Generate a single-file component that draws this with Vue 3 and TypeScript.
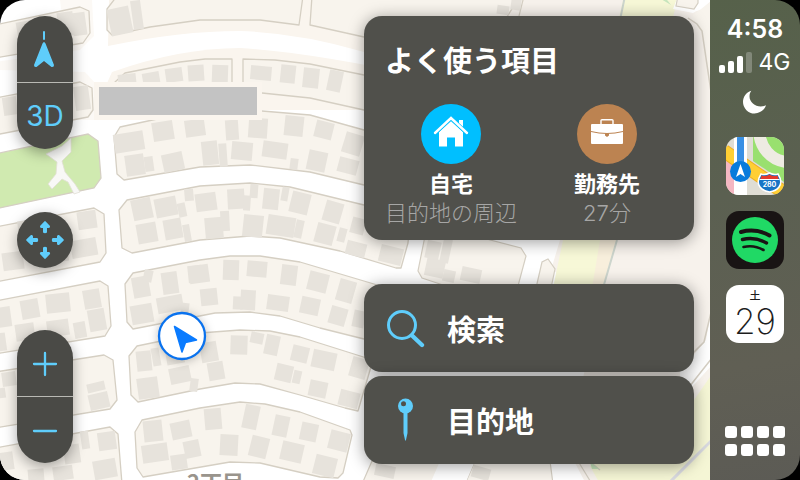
<script setup lang="ts">
type Building = [cx: number, cy: number, w: number, h: number, angle: number]

const blocks: string[] = [
  'M-5 25L80 7L89 11L90 33L83 43L-5 58Z',
  'M117-4L107 9L107 30L112 35L150 27L200 20L260 20L299 25L303-4Z',
  'M312-4L310 25L364 37L480 60L520-4Z',
  'M115 82L125 73L180 62L205 59L232 59L232 90L115 98Z',
  'M243 93L243 59L275 60L310 64L364 75L430 92V126L364 110L310 98L262 93Z',
  'M120 127L185 113L262 111L310 115L364 130L430 150V202L364 185L310 172L250 165L200 167L124 180L117 174L114 137Z',
  'M127 200L200 186L250 183L290 187L364 205L410 220L408 243L401 268L396 268L340 251L280 238L250 236L200 240L132 253L122 248L119 210Z',
  'M133 273L200 260L230 256L260 256L300 262L374 284L400 292V350L364 339L320 328L280 316L250 312L215 313L133 329L127 322L125 284Z',
  'M137 346L200 333L240 330L270 331L300 337L373 360L358 411L345 408L300 395L260 384L235 383L200 389L138 402L131 395L129 356Z',
  'M142 420L200 408L240 402L265 404L300 412L350 430L352 435L343 473L338 478L320 477L260 463L230 462L143 477L137 468L135 432Z',
  'M-5 98L80 82L92 88L93 110L88 117L-5 135Z',
  'M-5 227L94 208L104 214L106 253L100 262L-5 282Z',
  'M-5 301L100 281L108 286L111 326L105 336L-5 354Z',
  'M-5 372L104 355L113 360L117 400L110 409L-5 428Z',
  'M-5 448L110 427L118 434L122 484H-5Z',
]

const buildings: Building[] = [
  [27, 30, 20, 18, -10], [66, 24, 16, 24, -8], [79, 24, 14, 23, -8], [82, 98, 15, 24, -8], [10, 106, 14, 18, -8],
  [120, 21, 22, 27, -12], [137, 15, 10, 29, -8],
  [127, 79, 18, 10, -6], [151, 78, 17, 11, -10], [174, 75, 17, 14, -8], [196, 73, 16, 16, -4], [220, 74, 16, 18, 2],
  [261, 73, 21, 14, 5], [288, 74, 15, 18, 6], [311, 78, 16, 20, 6], [335, 81, 14, 21, 12],
  [129, 142, 30, 19, -9], [135, 165, 19, 21, -8], [149, 164, 9, 15, -8], [163, 131, 21, 19, -9], [173, 162, 21, 18, -12],
  [195, 128, 20, 17, -8], [232, 130, 13, 20, -4], [258, 128, 19, 20, 4], [294, 126, 19, 20, 6], [324, 130, 18, 17, 14], [353, 144, 19, 21, 17],
  [210, 153, 16, 24, -6], [223, 155, 8, 23, -4], [242, 151, 21, 18, 5], [275, 150, 25, 16, 8], [294, 164, 8, 11, 8], [317, 161, 19, 20, 12], [348, 166, 20, 15, 15],
  [142, 209, 20, 21, -12], [166, 207, 22, 19, -11], [182, 210, 8, 14, -12], [189, 195, 9, 12, -5], [147, 233, 20, 20, -10], [173, 229, 18, 20, -10], [187, 233, 7, 17, -10],
  [206, 202, 21, 18, -8], [236, 199, 17, 20, -3], [247, 203, 7, 15, 4], [254, 191, 8, 14, 4], [271, 199, 16, 21, 6], [285, 194, 7, 14, 10], [300, 203, 19, 21, 14], [333, 212, 18, 21, 16],
  [214, 228, 18, 21, -5], [225, 221, 9, 20, -3], [253, 226, 20, 22, 6], [281, 226, 28, 20, 9], [299, 229, 8, 18, 12], [325, 234, 19, 20, 15], [342, 235, 8, 14, 15], [358, 226, 14, 16, 15], [356, 249, 20, 14, 14], [391, 255, 23, 17, 14],
  [13, 261, 21, 18, -8], [84, 248, 26, 18, -10], [87, 220, 19, 18, -8], [58, 253, 20, 18, -8], [28, 228, 20, 16, -8],
  [4, 317, 14, 20, -8], [30, 309, 18, 19, -10], [58, 303, 24, 19, -6], [92, 299, 17, 19, -10], [97, 320, 17, 22, -10], [25, 332, 19, 17, -8], [58, 328, 22, 16, -8], [80, 330, 12, 16, -10], [1, 342, 10, 18, -8],
  [96, 387, 18, 9, -13], [99, 401, 20, 16, -13], [9, 379, 14, 14, -8], [2, 393, 7, 10, -8],
  [85, 440, 8, 18, -8], [107, 441, 18, 18, -8], [105, 469, 23, 19, -10], [72, 454, 16, 19, -8], [63, 473, 20, 14, -8], [36, 475, 16, 12, -5], [7, 461, 13, 18, -8],
  [141, 287, 17, 21, -10], [148, 276, 9, 12, 12], [170, 283, 16, 22, -8], [195, 274, 14, 17, -6], [142, 314, 22, 19, -10], [170, 304, 26, 16, -10], [185, 308, 8, 10, 8],
  [199, 274, 20, 18, -8], [231, 270, 16, 20, 2], [257, 269, 20, 16, 5], [289, 275, 16, 20, 7], [318, 282, 20, 19, 14], [346, 291, 17, 22, 16],
  [209, 297, 17, 17, -6], [248, 300, 15, 20, 3], [238, 303, 10, 13, 3], [278, 303, 22, 15, 8], [310, 306, 19, 17, 12], [338, 316, 17, 18, 16], [359, 319, 12, 17, 12],
  [144, 361, 15, 20, -6], [156, 357, 8, 18, -10], [175, 356, 18, 16, -10], [148, 388, 21, 21, -8], [180, 375, 21, 16, -12], [194, 385, 8, 13, 8],
  [209, 352, 17, 20, -10], [216, 371, 16, 18, -10], [239, 345, 17, 19, 2], [257, 338, 13, 11, 12], [272, 345, 14, 20, 12], [300, 354, 17, 16, 14], [324, 360, 24, 18, 12], [359, 368, 17, 20, 16],
  [284, 373, 17, 17, 13], [297, 377, 8, 13, 13], [318, 389, 18, 16, 12], [349, 399, 20, 16, 14],
  [153, 431, 19, 21, -6], [181, 430, 20, 17, -12], [155, 453, 26, 18, -8], [179, 462, 16, 15, -8], [192, 449, 16, 17, -12],
  [213, 419, 17, 21, -5], [251, 417, 15, 24, 12], [281, 426, 15, 21, 12], [309, 432, 17, 18, 12], [339, 441, 20, 19, 14],
  [229, 445, 18, 21, 3], [259, 447, 18, 21, 14], [292, 452, 22, 19, 13], [325, 466, 22, 20, 14],
  [435, 268, 19, 18, 12], [449, 276, 12, 12, 12], [471, 275, 20, 14, 12], [433, 250, 14, 18, 12], [446, 251, 9, 24, 12],
  [503, 10, 12, 9, 8], [516, 4, 10, 12, 8], [385, 471, 20, 12, 12], [481, 473, 18, 12, 16],
]

const signalBars: { height: number; on: boolean }[] = [
  { height: 8, on: true },
  { height: 12, on: true },
  { height: 17, on: true },
  { height: 21, on: false },
]
</script>

<template>
  <div class="screen">
    <main class="map-area">
      <svg class="map" viewBox="0 0 710 480" preserveAspectRatio="xMinYMin slice" aria-hidden="true">
        <rect width="710" height="480" fill="#fff" />
        <!-- pale verges around the upper road -->
        <g fill="#faf5ee">
          <path d="M109 0H364V52Q300 33 240 31Q180 31 108 46Z" />
          <path d="M112 72Q180 48 240 48Q310 52 430 78V110H95Z" />
          <path d="M60 0H92L94 36L80 50L-5 62V70L85 72L96 84L94 120H76Z" opacity=".6" />
        </g>
        <!-- ground east of the housing -->
        <path d="M395-4H720V484H560L600 300L520 250L430 200L380 60Z" fill="#f7f2ec" />
        <path d="M450-4L480 12L364-4ZM485-4L500 0L492 20L460 14Z" fill="#fff" />
        <path d="M497-4L492 20M524-4L518 20M370-4L420 12L475 8L472-4" fill="none" stroke="#d5cfc3" stroke-width="1.2" />
        <path d="M624-4H678L640 160L617 242L603 288H553L563 240L600 100Z" fill="#f7f8d7" />
        <path d="M600 240H617L603 288H592Z" fill="#f8efdc" />
        <path d="M625-4L620 20M617 240L603 288" stroke="#cdd5cd" stroke-width="2" />
        <path d="M664-4L671 5L661-1Z" fill="#c7e5bd" />
        <path d="M678-4L673 9L693 13Q712 2 712 24V-4Z" fill="#fff" />
        <path d="M678-4L676 6L694 9L698 3V-4" fill="#f8f4ed" stroke="#d5cfc3" stroke-width="1.2" />
        <path d="M690 18L701 28L712 90V0Z" fill="#f8f4ed" />
        <path d="M688 18L697 24L702 31L711 92" fill="none" stroke="#d5cfc3" stroke-width="1.5" />
        <path d="M408 238L401 272L360 262V290H545L560 240Z" fill="#fff" />
        <path d="M425 236L418 271L422 278L446 286H518L526 256L521 248L475 236Z" fill="#f8f4ed" stroke="#d5cfc3" stroke-width="1.2" />
        <path d="M536 288L542 262L548 259L555 269L551 288Z" fill="#f8f4ed" stroke="#d5cfc3" stroke-width="1.2" />
        <path d="M712 306L706 340L680 372V400L712 365Z" fill="#fff" />
        <path d="M712 308L704 342L680 366M712 358L682 396" fill="none" stroke="#d5cfc3" stroke-width="1.5" />
        <path d="M712 374L680 420L590 466L600 484H712Z" fill="#f5f6d5" />
        <path d="M712 440L668 484" stroke="#d9dae0" stroke-width="3" />
        <path d="M360 340H400V484H350Z" fill="#fff" />
        <path d="M372 461L362 484H440L452 461ZM475 461L465 484H553L550 461Z" fill="#f8f4ed" stroke="#d5cfc3" stroke-width="1.2" />
        <path d="M440 461H475L465 484H430ZM556 461H574L586 484H560Z" fill="#fff" />
        <path d="M578 461L592 484M589 461L600 470" stroke="#d5cfc3" stroke-width="1.2" />
        <path d="M590 462L599 469L592 469Z" fill="#c7e5bd" />

        <path v-for="(d, i) in blocks" :key="`k${i}`" :d="d" fill="#f8f4ed" stroke="#d5cfc3" stroke-width="1.3" stroke-linejoin="round" />
        <path d="M-5 154L88 134L98 141L101 178L94 188L-5 209Z" fill="#d0eab0" stroke="#d5cfc3" stroke-width="1.3" />
        <path d="M71 138L71 152L62 161L65 172L75 184L80 192L74 194L68 182L62 179L52 189L48 184L56 174L57 162L46 154L62 146Z" fill="#f8f8f6" stroke="#e2e0d6" stroke-width=".8" />
        <rect
          v-for="([cx, cy, w, h, a], i) in buildings" :key="`b${i}`"
          :x="cx - w / 2" :y="cy - h / 2" :width="w" :height="h"
          :transform="`rotate(${a} ${cx} ${cy})`" fill="#e7e3dc"
        />
        <rect x="94" y="82" width="168" height="38" fill="#faf5ee" />
        <rect x="99" y="87" width="158" height="28" fill="#c3c3c3" />
        <text class="district" x="187" y="491">2丁目</text>
        <g class="marker">
          <circle cx="182" cy="336" r="23" fill="#fff" stroke="#0a72ee" stroke-width="2.300" />
          <path d="M174.500 326.500L196.500 340L185.500 342.500L182 352Z" fill="#0a7bff" stroke="#0a7bff" stroke-width="1.500" stroke-linejoin="round" />
        </g>
      </svg>

      <nav class="controls" aria-label="Map">
        <div class="pill">
          <button type="button" aria-label="North">
            <svg width="56" height="66" viewBox="0 0 56 66" fill="#5fcdfb">
              <rect x="26" y="15" width="2" height="9" rx="1" />
              <path d="M25.500 27.500Q27 24.500 28.500 27.500L37 49Q37.200 51.500 34.500 51L27 45L19.500 51Q16.800 51.500 17 49Z" />
            </svg>
          </button>
          <button type="button" class="three-d">3D</button>
        </div>
        <button type="button" class="round" aria-label="Pan">
          <svg width="56" height="56" viewBox="0 0 56 56" fill="#5fcdfb">
            <path v-for="r in [0, 90, 180, 270]" :key="r" :transform="`rotate(${r} 28 28)`" d="M27.300 9.500Q28 8.700 28.700 9.500L33 14Q33.500 16 31.500 16H30V20.500Q28 22 26 20.500V16H24.500Q22.500 16 23 14Z" />
          </svg>
        </button>
        <div class="pill">
          <button type="button" aria-label="Zoom in">
            <svg width="56" height="66" viewBox="0 0 56 66" stroke="#5fcdfb" stroke-width="2.300" stroke-linecap="round"><path d="M17 34H39M28 23V45" /></svg>
          </button>
          <button type="button" aria-label="Zoom out">
            <svg width="56" height="66" viewBox="0 0 56 66" stroke="#5fcdfb" stroke-width="2.300" stroke-linecap="round"><path d="M17 34H39" /></svg>
          </button>
        </div>
      </nav>

      <div class="panels">
        <section class="card favorites">
          <h1>よく使う項目</h1>
          <div class="places">
            <button type="button" class="place">
              <svg width="60" height="60" viewBox="0 0 60 60">
                <circle cx="30" cy="30" r="30" fill="#00bfff" />
                <path d="M18 28L30 16.500L42 28V42.500H34V33.500H26V42.500H18ZM38 16H42V24L38 20Z" fill="#fff" />
                <path d="M14 29L30 14.500L46 29" fill="none" stroke="#00bfff" stroke-width="4" />
                <path d="M14 29L30 14L46 29" fill="none" stroke="#fff" stroke-width="2.400" stroke-linecap="round" />
              </svg>
              <span class="name">自宅</span>
              <span class="detail">目的地の周辺</span>
            </button>
            <button type="button" class="place">
              <svg width="60" height="60" viewBox="0 0 60 60">
                <circle cx="30" cy="30" r="30" fill="#bc8351" />
                <path d="M24 20V16.500Q24 15.700 25 15.700H35Q36 15.700 36 16.500V20" fill="none" stroke="#fff" stroke-width="1.400" />
                <rect x="14" y="20" width="32" height="20" rx="1" fill="#fff" />
                <path d="M14 27.500Q30 31.500 46 27.500" fill="none" stroke="#bc8351" stroke-width="1" />
                <path d="M28 29.500H32V31.500L30 33L28 31.500Z" fill="#bc8351" />
              </svg>
              <span class="name">勤務先</span>
              <span class="detail">27分</span>
            </button>
          </div>
        </section>
        <div class="actions">
          <button type="button" class="card action">
            <svg width="40" height="44" viewBox="0 0 40 44" fill="none" stroke="#5fcdfb">
              <circle cx="17" cy="19" r="13.500" stroke-width="3" />
              <path d="M27 29.500L37 39" stroke-width="4.300" stroke-linecap="round" />
            </svg>
            <span>検索</span>
          </button>
          <button type="button" class="card action">
            <svg width="40" height="44" viewBox="0 0 40 44">
              <path d="M18.500 14H22.500V35L21 42Q20.500 43.500 20 42L18.500 35Z" fill="#5fcdfb" />
              <circle cx="20.500" cy="8" r="7.500" fill="#5fcdfb" />
              <circle cx="18.500" cy="5.800" r="2.500" fill="#50504a" />
            </svg>
            <span>目的地</span>
          </button>
        </div>
      </div>
    </main>

    <aside class="dock">
      <time class="clock">4:58</time>
      <div class="network">
        <div class="bars">
          <i v-for="(bar, i) in signalBars" :key="i" :class="{ off: !bar.on }" :style="{ height: bar.height + 'px' }"></i>
        </div>
        <span>4G</span>
      </div>
      <svg class="moon" width="26" height="24" viewBox="0 0 26 24" fill="#fff"><path d="M9.300 .8C3.800 2.600 1 7.200 1 12A11.600 11.600 0 0 0 12.600 23.500C18 23.500 22.300 20 24 15.200C16.500 19 7.500 13.500 7.500 6.500C7.500 4.200 8.200 2.300 9.300 .8Z" /></svg>
      <div class="apps">
        <a href="#maps" class="app" aria-label="Maps">
          <svg width="58" height="58" viewBox="0 0 58 58">
            <rect width="58" height="58" fill="#dfddd4" />
            <path d="M27 0H58V45L27 24Z" fill="#99e06f" />
            <path d="M31 0C32 17 43 29 58 31" fill="none" stroke="#eeebe2" stroke-width="12" transform="translate(2 -6)" />
            <path d="M0 24L8 29V58H0Z" fill="#f4b7c2" />
            <path d="M-2 14L60 57" stroke="#efae25" stroke-width="14" />
            <path d="M-2 14L60 57" stroke="#ffcf34" stroke-width="12" />
            <path d="M8 0H21V58H8Z" fill="#fff" />
            <path d="M11 0H18V32H11Z" fill="#3990e4" />
            <circle cx="14.500" cy="34.500" r="10.500" fill="#087bdc" />
            <path d="M14.500 27L19 40L14.500 37L10 40Z" fill="#fff" />
            <path d="M35 37Q39 38.500 43.500 36Q48 38.500 52 37Q57 45 53 50Q50 54 43.500 55Q37 54 34 50Q30 45 35 37Z" fill="#1874c6" stroke="#fff" stroke-width="1.500" />
            <path d="M35.500 38.500Q39.500 40 43.500 37.500Q47.500 40 51.500 38.500L52.500 42H34.500Z" fill="#e33a2d" />
            <path d="M33.500 42.500H53.500" stroke="#fff" />
            <text class="route" x="43.500" y="49.500" text-anchor="middle">280</text>
          </svg>
        </a>
        <a href="#music" class="app" aria-label="Spotify">
          <svg width="58" height="58" viewBox="0 0 58 58" fill="none" stroke="#191414" stroke-linecap="round">
            <rect width="58" height="58" fill="#191414" stroke="none" />
            <circle cx="29" cy="29" r="23" fill="#20d965" stroke="none" />
            <path d="M15 21Q30 17 43.500 24.500" stroke-width="4" />
            <path d="M16.500 28.500Q29 25.500 40.500 32" stroke-width="3.400" />
            <path d="M17.500 36Q28 33.500 37.500 39" stroke-width="2.600" />
          </svg>
        </a>
        <a href="#calendar" class="app calendar">
          <span class="weekday">土</span>
          <span class="day">29</span>
        </a>
      </div>
      <button type="button" class="launcher" aria-label="Apps"><i v-for="n in 8" :key="n"></i></button>
    </aside>
  </div>
</template>

<style>
body {
  background: #000;
}
</style>

<style scoped>
.screen {
  display: grid;
  grid-template-columns: minmax(0, 1fr) 90px;
  min-height: 100vh;
  border-radius: 25px;
  overflow: hidden;
  color: #fff;
  font-family: Inter, "Noto Sans CJK JP", sans-serif;
}
button {
  border: 0;
  padding: 0;
  background: none;
  color: inherit;
  font: inherit;
  cursor: pointer;
}
svg {
  display: block;
}
.map-area {
  position: relative;
  display: flex;
  justify-content: space-between;
  padding: 16px 16px 16px 17px;
  overflow: hidden;
}
.map {
  position: absolute;
  inset: 0;
  width: 100%;
  height: 100%;
}
.district {
  font: 700 22px "Noto Sans CJK JP", sans-serif;
  fill: #99948c;
}
.marker {
  filter: drop-shadow(0 1px 5px rgba(0, 0, 0, 0.25));
}
.controls,
.panels {
  position: relative;
  display: flex;
  flex-direction: column;
  justify-content: space-between;
}
.controls {
  width: 56px;
  padding-bottom: 1px;
}
.pill,
.round {
  border-radius: 28px;
  background: #4a4a46;
  box-shadow: 0 4px 14px rgba(0, 0, 0, 0.35);
  overflow: hidden;
}
.pill button {
  display: block;
  width: 56px;
  height: 66px;
}
.pill button + button {
  height: 67px;
  border-top: 1px solid #b9b9b4;
}
.round {
  width: 56px;
  height: 56px;
}
.pill .three-d {
  color: #5fcdfb;
  font-size: 28px;
}
.panels {
  width: 330px;
}
.card {
  border-radius: 18px;
  background: #50504b;
  box-shadow: 0 2px 16px rgba(0, 0, 0, 0.4);
}
.favorites {
  height: 224px;
  padding: 26px 21px 0;
  box-sizing: border-box;
}
h1 {
  margin: 0;
  font-size: 29px;
  line-height: 40px;
  font-weight: 700;
}
.places {
  display: flex;
  justify-content: space-between;
  padding-top: 22px;
}
.place {
  display: flex;
  flex-direction: column;
  align-items: center;
  width: 132px;
  white-space: nowrap;
}
.name {
  padding-top: 6px;
  font-size: 22px;
  line-height: 29px;
  font-weight: 700;
}
.detail {
  font-size: 22px;
  line-height: 29px;
  font-weight: 300;
  color: #a6a6a5;
}
.actions {
  display: flex;
  flex-direction: column;
  gap: 4px;
}
.action {
  display: flex;
  align-items: center;
  gap: 22px;
  height: 88px;
  padding: 0 21px;
  font-size: 29px;
  font-weight: 700;
}
.dock {
  display: flex;
  flex-direction: column;
  align-items: center;
  padding: 14px 0 24px;
  background: linear-gradient(170deg, #56614a 0%, #5b6051 40%, #605f54 75%, #5c5b55 100%);
}
.clock {
  font-size: 25px;
  line-height: 30px;
  font-weight: 600;
}
.network {
  display: flex;
  align-items: center;
  gap: 6px;
  height: 36px;
  font-size: 23px;
}
.bars {
  display: flex;
  align-items: flex-end;
  gap: 3px;
  height: 21px;
}
.bars i {
  width: 6px;
  border-radius: 2px;
  background: #fff;
}
.bars .off {
  opacity: 0.25;
}
.moon {
  margin-top: 10px;
}
.apps {
  display: grid;
  gap: 16px;
  margin-top: 23px;
}
.app {
  display: block;
  width: 58px;
  height: 58px;
  border-radius: 13px;
  overflow: hidden;
}
.route {
  font: 700 7px Inter, sans-serif;
  fill: #fff;
}
.calendar {
  display: flex;
  flex-direction: column;
  align-items: center;
  background: #fff;
  color: #1c1c1c;
  text-decoration: none;
}
.weekday {
  padding-top: 4px;
  font-size: 11px;
  line-height: 14px;
  font-weight: 500;
}
.day {
  font-size: 35px;
  line-height: 36px;
  font-weight: 200;
}
.launcher {
  display: grid;
  grid-template-columns: repeat(4, 12px);
  gap: 6px 4px;
  margin-top: auto;
}
.launcher i {
  height: 12px;
  border-radius: 3px;
  background: #fff;
}
</style>
